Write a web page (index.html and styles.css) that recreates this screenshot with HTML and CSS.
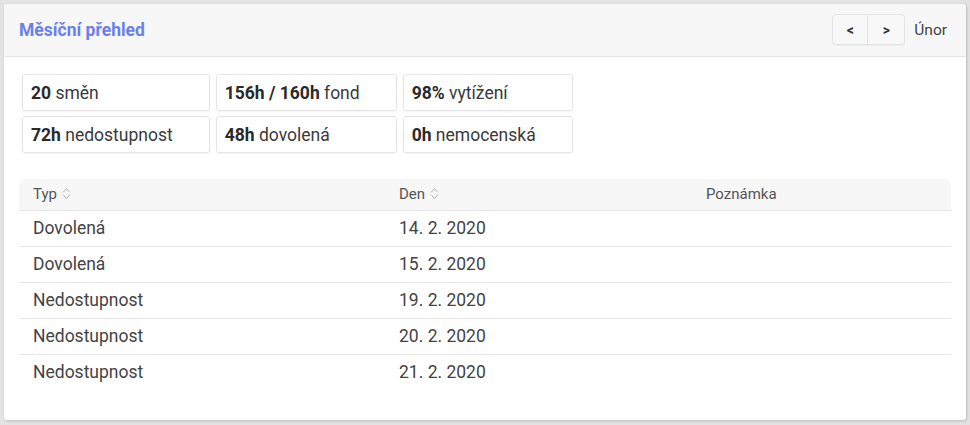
FILE: index.html
```html
<!DOCTYPE html>
<html lang="cs">
<head>
<meta charset="utf-8">
<link rel="stylesheet" href="styles.css">
</head>
<body>
<div class="card">
  <div class="card-header">
    <h2 class="title">Měsíční přehled</h2>
    <div class="nav">
      <div class="btn-group">
        <button class="btn">&lt;</button>
        <button class="btn">&gt;</button>
      </div>
      <span class="month">Únor</span>
    </div>
  </div>
  <div class="card-body">
    <div class="stats">
      <div class="stat"><b>20</b>&nbsp;směn</div>
      <div class="stat"><b>156h / 160h</b>&nbsp;fond</div>
      <div class="stat"><b>98%</b>&nbsp;vytížení</div>
      <div class="stat"><b>72h</b>&nbsp;nedostupnost</div>
      <div class="stat"><b>48h</b>&nbsp;dovolená</div>
      <div class="stat"><b>0h</b>&nbsp;nemocenská</div>
    </div>
    <table class="tbl">
      <thead>
        <tr>
          <th class="c1">Typ <svg class="sort" viewBox="0 0 9 13" width="9" height="13"><path d="M1.2 5.3 L4.5 1.5 L7.8 5.3 M1.2 7.7 L4.5 11.5 L7.8 7.7" fill="none" stroke="#b0b0b0" stroke-width="1"/></svg></th>
          <th class="c2">Den <svg class="sort" viewBox="0 0 9 13" width="9" height="13"><path d="M1.2 5.3 L4.5 1.5 L7.8 5.3 M1.2 7.7 L4.5 11.5 L7.8 7.7" fill="none" stroke="#b0b0b0" stroke-width="1"/></svg></th>
          <th class="c3">Poznámka</th>
        </tr>
      </thead>
      <tbody>
        <tr><td>Dovolená</td><td>14. 2. 2020</td><td></td></tr>
        <tr><td>Dovolená</td><td>15. 2. 2020</td><td></td></tr>
        <tr><td>Nedostupnost</td><td>19. 2. 2020</td><td></td></tr>
        <tr><td>Nedostupnost</td><td>20. 2. 2020</td><td></td></tr>
        <tr><td>Nedostupnost</td><td>21. 2. 2020</td><td></td></tr>
      </tbody>
    </table>
  </div>
</div>
</body>
</html>
```
FILE: styles.css
```css
html, body {
  margin: 0;
  padding: 0;
}
body {
  background: #e3e3e3;
  padding: 4px;
  font-family: Roboto, "Liberation Sans", sans-serif;
  color: #333;
}
.card {
  width: 962px;
  height: 416px;
  background: #fff;
  border-radius: 3px;
  box-shadow: 1px 1px 3px rgba(0,0,0,0.18);
  overflow: hidden;
  box-sizing: border-box;
}
.card-header {
  height: 53px;
  box-sizing: border-box;
  background: #f7f7f7;
  border-bottom: 1px solid #e6e6e6;
  display: flex;
  align-items: center;
  justify-content: space-between;
  padding: 0 19px 0 15px;
}
.title {
  margin: 0;
  font-size: 17.5px;
  font-weight: 700;
  color: #6b80ea;
  padding-bottom: 1px;
}
.nav {
  display: flex;
  align-items: center;
  gap: 9px;
  padding-bottom: 1px;
}
.btn-group {
  display: flex;
}
.btn {
  width: 37px;
  height: 31px;
  box-sizing: border-box;
  border: 1px solid #e4e4e4;
  background: #f8f8f8;
  font-family: Roboto, "Liberation Sans", sans-serif;
  font-size: 14px;
  font-weight: 700;
  color: #333;
  padding: 0;
  margin: 0;
  box-shadow: 0 1px 1px rgba(0,0,0,0.04);
}
.btn:first-child {
  border-radius: 4px 0 0 4px;
  width: 36px;
}
.btn:last-child {
  border-radius: 0 4px 4px 0;
  border-left: none;
}
.month {
  font-size: 15.5px;
  color: #444;
}
.card-body {
  padding: 17px 15px 0 15px;
}
.stats {
  display: inline-grid;
  grid-template-columns: auto auto auto;
  column-gap: 6px;
  row-gap: 5px;
  margin-left: 3px;
}
.stat {
  height: 37px;
  box-sizing: border-box;
  border: 1px solid #e5e5e5;
  border-radius: 3px;
  padding: 0 36px 0 8px;
  display: flex;
  align-items: center;
  font-size: 17.5px;
  color: #3a3a3a;
  box-shadow: 0 1px 2px rgba(0,0,0,0.05);
  white-space: nowrap;
}
.stat b {
  font-weight: 700;
  color: #2a2a2a;
}
.tbl {
  margin-top: 26px;
  width: 932px;
  border-collapse: collapse;
  table-layout: fixed;
}
.tbl thead tr {
  background: #f7f7f7;
}
.tbl th {
  height: 31px;
  padding: 0 14px;
  text-align: left;
  font-size: 15px;
  font-weight: 400;
  color: #555;
  border-bottom: 1px solid #e6e6e6;
  vertical-align: middle;
}
.tbl th.c1 { width: 366px; box-sizing: border-box; border-top-left-radius: 6px; }
.tbl th.c2 { width: 307px; box-sizing: border-box; }
.tbl th.c3 { box-sizing: border-box; border-top-right-radius: 6px; }
.sort {
  vertical-align: -1px;
  margin-left: 1px;
}
.tbl td {
  height: 35px;
  padding: 0 14px;
  font-size: 17.5px;
  color: #444;
  border-bottom: 1px solid #e6e6e6;
  vertical-align: middle;
}
.tbl tbody tr:last-child td {
  border-bottom: none;
}
```
